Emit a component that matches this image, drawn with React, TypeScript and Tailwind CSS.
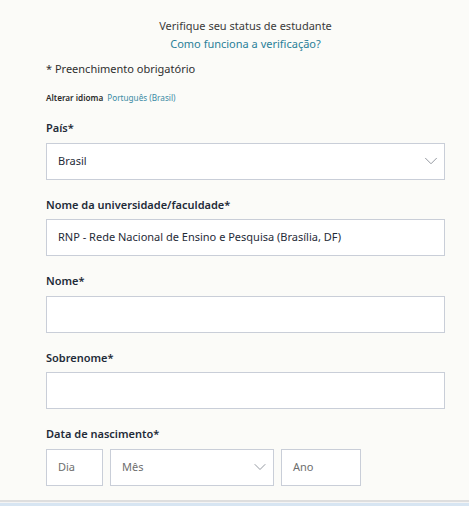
import { ChevronDown } from 'lucide-react';

const font = { fontFamily: '"Noto Sans", "Open Sans", sans-serif' };

function Label({ children, className = '' }: { children: React.ReactNode; className?: string }) {
  return (
    <div className={`h-[18px] text-[11px] leading-[18px] font-semibold text-[#1f2b38] ${className}`}>
      {children}
    </div>
  );
}

function Box({ children, className = '' }: { children?: React.ReactNode; className?: string }) {
  return (
    <div
      className={`h-[37px] bg-white border border-[#c9ced8] flex items-center text-[11px] ${className}`}
    >
      {children}
    </div>
  );
}

export default function App() {
  return (
    <div className="w-[469px] h-[506px] bg-[#fbfbf8] flex flex-col overflow-hidden" style={font}>
      <div className="flex-1 pl-[46px] pr-[24px]">
        {/* Header */}
        <div className="pt-[17px] text-center">
          <p className="text-[11px] leading-[18px] text-[#3a3a3a]">Verifique seu status de estudante</p>
          <p className="text-[11px] leading-[18px] text-[#2a7f98]">Como funciona a verificação?</p>
        </div>

        <p className="mt-[6px] text-[11px] leading-[20px] text-[#2f2f2f]">* Preenchimento obrigatório</p>

        <div className="mt-[12px] flex items-center gap-[4px] text-[8.2px] leading-[14px]">
          <span className="font-semibold text-[#2b2b2b]">Alterar idioma</span>
          <span className="text-[#3a8aa4]">Português (Brasil)</span>
        </div>

        {/* País */}
        <Label className="mt-[14px]">País*</Label>
        <Box className="mt-[5.5px] justify-between pl-[11px] pr-[2px]">
          <span className="text-[#1f2b38]">Brasil</span>
          <ChevronDown className="w-[22px] h-[22px] text-[#8a8f98]" strokeWidth={1} />
        </Box>

        <Label className="mt-[16px]">Nome da universidade/faculdade*</Label>
        <Box className="mt-[5.5px] pl-[11px]">
          <span className="text-[#1f2b38]">RNP - Rede Nacional de Ensino e Pesquisa (Brasília, DF)</span>
        </Box>

        <Label className="mt-[16px]">Nome*</Label>
        <Box className="mt-[5.5px]" />

        <Label className="mt-[16px]">Sobrenome*</Label>
        <Box className="mt-[5.5px]" />

        <Label className="mt-[16px]">Data de nascimento*</Label>
        <div className="mt-[5.5px] flex gap-[7px]">
          <Box className="w-[57px] pl-[11px]">
            <span className="text-[#6e6e6e]">Dia</span>
          </Box>
          <Box className="w-[164px] justify-between pl-[11px] pr-[3px]">
            <span className="text-[#6e6e6e]">Mês</span>
            <ChevronDown className="w-[20px] h-[20px] text-[#8a8f98]" strokeWidth={1.1} />
          </Box>
          <Box className="w-[80px] pl-[11px]">
            <span className="text-[#6e6e6e]">Ano</span>
          </Box>
        </div>
      </div>

      <div className="h-[2px] bg-[#dedede]" />
      <div className="h-[1px] bg-[#f4f4f4]" />
      <div className="h-[3px] bg-[#d7e5f2]" />
    </div>
  );
}
